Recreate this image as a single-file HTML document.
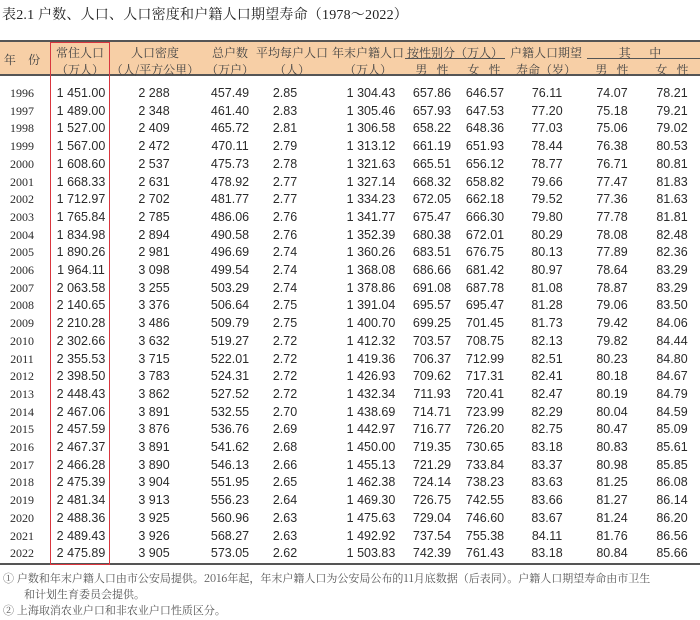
<!DOCTYPE html>
<html><head><meta charset="utf-8"><style>
body{margin:0;width:700px;height:620px;background:#fff;position:relative;overflow:hidden;font-family:"Liberation Sans","Noto Sans CJK SC",sans-serif;color:#2a2a2a}
.t{position:absolute;left:2px;top:4px;font:14px "Liberation Serif","Noto Serif CJK SC",serif;color:#222;letter-spacing:0.2px}
.hd{position:absolute;left:0;top:40px;width:700px;height:36px;background:#f7cfa6;border-top:2px solid #555;border-bottom:2px solid #555;box-sizing:border-box}
.h{position:absolute;font:12px "Noto Serif CJK SC",serif;color:#444;white-space:nowrap;transform:translateX(-50%)}
.ln{position:absolute;height:1px;background:#555;top:58px}
.r{position:absolute;left:0;width:700px;height:18px;font-size:12.5px;line-height:18px}
.r span{position:absolute;width:90px;margin-left:-45px;text-align:center}
.r span:nth-child(1){left:22px;font-family:"Liberation Serif",serif;font-size:12px}
.r span:nth-child(2){left:81px}
.r span:nth-child(3){left:154px}
.r span:nth-child(4){left:230px}
.r span:nth-child(5){left:285px}
.r span:nth-child(6){left:371px}
.r span:nth-child(7){left:432px}
.r span:nth-child(8){left:485px}
.r span:nth-child(9){left:547px}
.r span:nth-child(10){left:612px}
.r span:nth-child(11){left:672px}
.bot{position:absolute;left:0;top:563px;width:700px;height:2px;background:#555}
.red{position:absolute;left:50px;top:42px;width:60px;height:523px;border:1.5px solid #d9363e;box-sizing:border-box}
.fn{position:absolute;font:11px "Noto Serif CJK SC",serif;color:#555;white-space:nowrap}
</style></head><body>
<div class="t">表2.1 户数、人口、人口密度和户籍人口期望寿命（1978～2022）</div>
<div class="hd"></div>
<div class="h" style="left:22px;top:51px">年&nbsp;&nbsp;&nbsp;&nbsp;份</div>
<div class="h" style="left:80px;top:44px">常住人口</div>
<div class="h" style="left:80px;top:61px">（万人）</div>
<div class="h" style="left:155px;top:44px">人口密度</div>
<div class="h" style="left:155px;top:61px">（人/平方公里）</div>
<div class="h" style="left:230px;top:44px">总户数</div>
<div class="h" style="left:230px;top:61px">（万户）</div>
<div class="h" style="left:292px;top:44px">平均每户人口</div>
<div class="h" style="left:292px;top:61px">（人）</div>
<div class="h" style="left:368px;top:44px">年末户籍人口</div>
<div class="h" style="left:368px;top:61px">（万人）</div>
<div class="h" style="left:455px;top:44px">按性别分（万人）</div>
<div class="h" style="left:432px;top:61px">男&nbsp;&nbsp;&nbsp;性</div>
<div class="h" style="left:484px;top:61px">女&nbsp;&nbsp;&nbsp;性</div>
<div class="h" style="left:546px;top:44px">户籍人口期望</div>
<div class="h" style="left:546px;top:61px">寿命（岁）</div>
<div class="h" style="left:640px;top:44px">其&nbsp;&nbsp;&nbsp;&nbsp;&nbsp;&nbsp;中</div>
<div class="h" style="left:612px;top:61px">男&nbsp;&nbsp;&nbsp;性</div>
<div class="h" style="left:672px;top:61px">女&nbsp;&nbsp;&nbsp;性</div>
<div class="ln" style="left:405px;width:100px"></div>
<div class="ln" style="left:587px;width:113px"></div>

<div class="r" style="top:84px"><span>1996</span><span>1 451.00</span><span>2 288</span><span>457.49</span><span>2.85</span><span>1 304.43</span><span>657.86</span><span>646.57</span><span>76.11</span><span>74.07</span><span>78.21</span></div>
<div class="r" style="top:101.7px"><span>1997</span><span>1 489.00</span><span>2 348</span><span>461.40</span><span>2.83</span><span>1 305.46</span><span>657.93</span><span>647.53</span><span>77.20</span><span>75.18</span><span>79.21</span></div>
<div class="r" style="top:119.4px"><span>1998</span><span>1 527.00</span><span>2 409</span><span>465.72</span><span>2.81</span><span>1 306.58</span><span>658.22</span><span>648.36</span><span>77.03</span><span>75.06</span><span>79.02</span></div>
<div class="r" style="top:137.1px"><span>1999</span><span>1 567.00</span><span>2 472</span><span>470.11</span><span>2.79</span><span>1 313.12</span><span>661.19</span><span>651.93</span><span>78.44</span><span>76.38</span><span>80.53</span></div>
<div class="r" style="top:154.8px"><span>2000</span><span>1 608.60</span><span>2 537</span><span>475.73</span><span>2.78</span><span>1 321.63</span><span>665.51</span><span>656.12</span><span>78.77</span><span>76.71</span><span>80.81</span></div>
<div class="r" style="top:172.5px"><span>2001</span><span>1 668.33</span><span>2 631</span><span>478.92</span><span>2.77</span><span>1 327.14</span><span>668.32</span><span>658.82</span><span>79.66</span><span>77.47</span><span>81.83</span></div>
<div class="r" style="top:190.2px"><span>2002</span><span>1 712.97</span><span>2 702</span><span>481.77</span><span>2.77</span><span>1 334.23</span><span>672.05</span><span>662.18</span><span>79.52</span><span>77.36</span><span>81.63</span></div>
<div class="r" style="top:207.9px"><span>2003</span><span>1 765.84</span><span>2 785</span><span>486.06</span><span>2.76</span><span>1 341.77</span><span>675.47</span><span>666.30</span><span>79.80</span><span>77.78</span><span>81.81</span></div>
<div class="r" style="top:225.6px"><span>2004</span><span>1 834.98</span><span>2 894</span><span>490.58</span><span>2.76</span><span>1 352.39</span><span>680.38</span><span>672.01</span><span>80.29</span><span>78.08</span><span>82.48</span></div>
<div class="r" style="top:243.3px"><span>2005</span><span>1 890.26</span><span>2 981</span><span>496.69</span><span>2.74</span><span>1 360.26</span><span>683.51</span><span>676.75</span><span>80.13</span><span>77.89</span><span>82.36</span></div>
<div class="r" style="top:261px"><span>2006</span><span>1 964.11</span><span>3 098</span><span>499.54</span><span>2.74</span><span>1 368.08</span><span>686.66</span><span>681.42</span><span>80.97</span><span>78.64</span><span>83.29</span></div>
<div class="r" style="top:278.7px"><span>2007</span><span>2 063.58</span><span>3 255</span><span>503.29</span><span>2.74</span><span>1 378.86</span><span>691.08</span><span>687.78</span><span>81.08</span><span>78.87</span><span>83.29</span></div>
<div class="r" style="top:296.4px"><span>2008</span><span>2 140.65</span><span>3 376</span><span>506.64</span><span>2.75</span><span>1 391.04</span><span>695.57</span><span>695.47</span><span>81.28</span><span>79.06</span><span>83.50</span></div>
<div class="r" style="top:314.1px"><span>2009</span><span>2 210.28</span><span>3 486</span><span>509.79</span><span>2.75</span><span>1 400.70</span><span>699.25</span><span>701.45</span><span>81.73</span><span>79.42</span><span>84.06</span></div>
<div class="r" style="top:331.8px"><span>2010</span><span>2 302.66</span><span>3 632</span><span>519.27</span><span>2.72</span><span>1 412.32</span><span>703.57</span><span>708.75</span><span>82.13</span><span>79.82</span><span>84.44</span></div>
<div class="r" style="top:349.5px"><span>2011</span><span>2 355.53</span><span>3 715</span><span>522.01</span><span>2.72</span><span>1 419.36</span><span>706.37</span><span>712.99</span><span>82.51</span><span>80.23</span><span>84.80</span></div>
<div class="r" style="top:367.2px"><span>2012</span><span>2 398.50</span><span>3 783</span><span>524.31</span><span>2.72</span><span>1 426.93</span><span>709.62</span><span>717.31</span><span>82.41</span><span>80.18</span><span>84.67</span></div>
<div class="r" style="top:384.9px"><span>2013</span><span>2 448.43</span><span>3 862</span><span>527.52</span><span>2.72</span><span>1 432.34</span><span>711.93</span><span>720.41</span><span>82.47</span><span>80.19</span><span>84.79</span></div>
<div class="r" style="top:402.6px"><span>2014</span><span>2 467.06</span><span>3 891</span><span>532.55</span><span>2.70</span><span>1 438.69</span><span>714.71</span><span>723.99</span><span>82.29</span><span>80.04</span><span>84.59</span></div>
<div class="r" style="top:420.3px"><span>2015</span><span>2 457.59</span><span>3 876</span><span>536.76</span><span>2.69</span><span>1 442.97</span><span>716.77</span><span>726.20</span><span>82.75</span><span>80.47</span><span>85.09</span></div>
<div class="r" style="top:438px"><span>2016</span><span>2 467.37</span><span>3 891</span><span>541.62</span><span>2.68</span><span>1 450.00</span><span>719.35</span><span>730.65</span><span>83.18</span><span>80.83</span><span>85.61</span></div>
<div class="r" style="top:455.7px"><span>2017</span><span>2 466.28</span><span>3 890</span><span>546.13</span><span>2.66</span><span>1 455.13</span><span>721.29</span><span>733.84</span><span>83.37</span><span>80.98</span><span>85.85</span></div>
<div class="r" style="top:473.4px"><span>2018</span><span>2 475.39</span><span>3 904</span><span>551.95</span><span>2.65</span><span>1 462.38</span><span>724.14</span><span>738.23</span><span>83.63</span><span>81.25</span><span>86.08</span></div>
<div class="r" style="top:491.1px"><span>2019</span><span>2 481.34</span><span>3 913</span><span>556.23</span><span>2.64</span><span>1 469.30</span><span>726.75</span><span>742.55</span><span>83.66</span><span>81.27</span><span>86.14</span></div>
<div class="r" style="top:508.8px"><span>2020</span><span>2 488.36</span><span>3 925</span><span>560.96</span><span>2.63</span><span>1 475.63</span><span>729.04</span><span>746.60</span><span>83.67</span><span>81.24</span><span>86.20</span></div>
<div class="r" style="top:526.5px"><span>2021</span><span>2 489.43</span><span>3 926</span><span>568.27</span><span>2.63</span><span>1 492.92</span><span>737.54</span><span>755.38</span><span>84.11</span><span>81.76</span><span>86.56</span></div>
<div class="r" style="top:544.2px"><span>2022</span><span>2 475.89</span><span>3 905</span><span>573.05</span><span>2.62</span><span>1 503.83</span><span>742.39</span><span>761.43</span><span>83.18</span><span>80.84</span><span>85.66</span></div>
<div class="bot"></div>
<div class="red"></div>
<div class="fn" style="left:3px;top:570px">① 户数和年末户籍人口由市公安局提供。2016年起，年末户籍人口为公安局公布的11月底数据（后表同）。户籍人口期望寿命由市卫生</div>
<div class="fn" style="left:24px;top:586px">和计划生育委员会提供。</div>
<div class="fn" style="left:3px;top:602px">② 上海取消农业户口和非农业户口性质区分。</div>
</body></html>
